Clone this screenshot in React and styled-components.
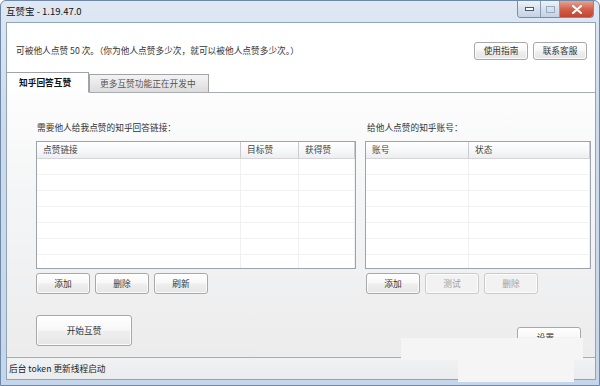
import React from 'react'
import styled, { createGlobalStyle } from 'styled-components'

const GlobalStyle = createGlobalStyle`
  html, body { margin: 0; padding: 0; background: #fff; }
  body { font-family: "Noto Sans CJK SC", "Liberation Sans", sans-serif; }
`

const FS = '8.7px'

const Window = styled.div`
  position: relative;
  width: 600px;
  height: 386px;
  box-sizing: border-box;
  display: flex;
  flex-direction: column;
  background: linear-gradient(180deg, #dfe8f3 0%, #cddbec 30%, #c6d6ea 100%);
  border: 1px solid #6f8aa8;
  border-radius: 6px 6px 0 0;
  overflow: hidden;
  color: #222;
`

const TitleBar = styled.div`
  height: 21px;
  display: flex;
  align-items: flex-start;
  justify-content: space-between;
  padding-left: 5px;
`

const Title = styled.span`
  font-size: 9.5px;
  line-height: 21px;
  color: #111;
`

const Caption = styled.div`
  display: flex;
  margin-right: 5px;
  border: 1px solid #7a8ea8;
  border-top: none;
  border-radius: 0 0 4px 4px;
  overflow: hidden;
  height: 16px;
`

const CapBtn = styled.div`
  width: ${p => p.w}px;
  height: 16px;
  display: flex;
  align-items: center;
  justify-content: center;
  background: ${p => p.close
    ? 'linear-gradient(180deg, #e8a493 0%, #d2614b 50%, #c3432d 100%)'
    : 'linear-gradient(180deg, #eef3f9 0%, #d6e1ee 50%, #c3d2e4 100%)'};
  border-left: ${p => p.first ? 'none' : '1px solid #8a9cb3'};
`

const Frame = styled.div`
  flex: 1;
  display: flex;
  padding: 0 5px 5px 5px;
  min-height: 0;
`

const Client = styled.div`
  flex: 1;
  display: flex;
  flex-direction: column;
  background: #fff;
  border: 1px solid #92a4ba;
`

const Header = styled.div`
  height: 43px;
  padding-top: 6px;
  display: flex;
  align-items: center;
  justify-content: space-between;
  padding-left: 9px;
  padding-right: 8px;
  font-size: ${FS};
  color: #333;
`

const HeaderButtons = styled.div`
  display: flex;
  gap: 5px;
`

const Button = styled.button`
  width: ${p => p.w}px;
  height: ${p => p.h || 21}px;
  box-sizing: border-box;
  padding: 0;
  font-family: inherit;
  font-size: ${FS};
  color: ${p => p.disabled ? '#a0a0a0' : '#333'};
  border: 1px solid ${p => p.disabled ? '#c8cacc' : '#a8a8a8'};
  border-radius: 3px;
  background: ${p => p.disabled
    ? '#f2f2f2'
    : 'linear-gradient(180deg, #ffffff 0%, #f8f8f8 45%, #eeeeee 55%, #e6e6e6 100%)'};
  box-shadow: inset 0 0 0 1px rgba(255,255,255,0.8);
`

const TabRow = styled.div`
  height: 20px;
  display: flex;
  align-items: flex-end;
  border-bottom: 1px solid #a8adb4;
`

const Tab = styled.div`
  box-sizing: border-box;
  height: ${p => p.active ? 21 : 18}px;
  margin-bottom: ${p => p.active ? -1 : 0}px;
  width: ${p => p.w}px;
  padding-left: ${p => p.active ? 12 : 10}px;
  display: flex;
  align-items: center;
  white-space: nowrap;
  font-size: ${FS};
  font-weight: ${p => p.active ? 'bold' : 'normal'};
  color: ${p => p.active ? '#111' : '#555'};
  background: ${p => p.active
    ? '#fff'
    : 'linear-gradient(180deg, #f3f3f3 0%, #e8e8e8 50%, #dcdcdc 100%)'};
  border: 1px solid #a0a4aa;
  border-bottom: ${p => p.active ? '1px solid #fff' : 'none'};
  border-left: ${p => p.active ? 'none' : '1px solid #a0a4aa'};
`

const Panel = styled.div`
  flex: 1;
  display: flex;
  flex-direction: column;
  padding: 28px 4px 0 29px;
  background: linear-gradient(180deg, #fdfdfd 0%, #f4f5f6 40%, #ececed 100%);
`

const Columns = styled.div`
  display: grid;
  grid-template-columns: 320px 226px;
  column-gap: 9px;
`

const Column = styled.div`
  display: flex;
  flex-direction: column;
`

const Label = styled.div`
  font-size: ${FS};
  color: #333;
  height: 14px;
  line-height: 14px;
  margin-bottom: 6px;
  padding-left: ${p => p.pad || 0}px;
`

const Table = styled.div`
  height: 128px;
  box-sizing: border-box;
  border: 1px solid #9da3aa;
  background: #fff;
  display: flex;
  flex-direction: column;
  overflow: hidden;
`

const HeadRow = styled.div`
  display: grid;
  grid-template-columns: ${p => p.cols};
  height: 16px;
  flex-shrink: 0;
  background: linear-gradient(180deg, #ffffff 0%, #f7f8f9 50%, #eceef1 100%);
  border-bottom: 1px solid #d5d5d5;
`

const HeadCell = styled.div`
  font-size: ${FS};
  color: #444;
  line-height: 16px;
  padding-left: 6px;
  border-right: 1px solid #c9cbce;
`

const BodyRow = styled.div`
  display: grid;
  grid-template-columns: ${p => p.cols};
  height: 15px;
  flex-shrink: 0;
  border-bottom: 1px solid #f1f1f1;
`

const BodyCell = styled.div`
  border-right: 1px solid #f0f0f0;
`

const ButtonRow = styled.div`
  display: flex;
  gap: 5px;
  margin-top: 4px;
  padding-left: ${p => p.pad || 0}px;
`

const BottomRow = styled.div`
  display: flex;
  justify-content: space-between;
  align-items: flex-start;
  margin-top: 21px;
  padding-right: 10px;
`

const SettingsButton = styled(Button)`
  margin-top: 12px;
`

const StatusBar = styled.div`
  height: 21px;
  display: flex;
  align-items: center;
  padding-left: 2px;
  font-size: ${FS};
  color: #222;
  background: linear-gradient(180deg, #f1f2f4 0%, #eaebed 100%);
  border-top: 1px solid #a7acb3;
`

const Watermark = styled.div`
  position: absolute;
  background: #f5f5f6;
  left: ${p => p.x}px;
  top: ${p => p.y}px;
  width: ${p => p.w}px;
  height: ${p => p.h}px;
`

const leftCols = '204px 58px 1fr'
const rightCols = '103px 1fr'

function GridTable({ cols, heads }) {
  const rows = Array.from({ length: 7 })
  return (
    <Table>
      <HeadRow cols={cols}>
        {heads.map(h => <HeadCell key={h}>{h}</HeadCell>)}
      </HeadRow>
      {rows.map((_, i) => (
        <BodyRow cols={cols} key={i}>
          {heads.map(h => <BodyCell key={h} />)}
        </BodyRow>
      ))}
    </Table>
  )
}

export default function App() {
  return (
    <>
      <GlobalStyle />
      <Window>
        <TitleBar>
          <Title>互赞宝 - 1.19.47.0</Title>
          <Caption>
            <CapBtn w={22} first>
              <svg width="9" height="4" viewBox="0 0 9 4"><rect x="0.5" y="0.5" width="8" height="3" fill="#fff" stroke="#4a5a70" strokeWidth="1" /></svg>
            </CapBtn>
            <CapBtn w={18}>
              <svg width="9" height="7" viewBox="0 0 9 7"><rect x="0.5" y="0.5" width="8" height="6" fill="none" stroke="#9aabc0" strokeWidth="1" /></svg>
            </CapBtn>
            <CapBtn w={33} close>
              <svg width="10" height="9" viewBox="0 0 10 9"><path d="M1 1 L9 8 M9 1 L1 8" stroke="#fff" strokeWidth="2.2" strokeLinecap="round" /></svg>
            </CapBtn>
          </Caption>
        </TitleBar>
        <Frame>
          <Client>
            <Header>
              <span>可被他人点赞 50 次。（你为他人点赞多少次，就可以被他人点赞多少次。）</span>
              <HeaderButtons>
                <Button w={54} h={18}>使用指南</Button>
                <Button w={54} h={18}>联系客服</Button>
              </HeaderButtons>
            </Header>
            <TabRow>
              <Tab active w={82}>知乎回答互赞</Tab>
              <Tab w={120}>更多互赞功能正在开发中</Tab>
            </TabRow>
            <Panel>
              <Columns>
                <Column>
                  <Label pad={1}>需要他人给我点赞的知乎回答链接：</Label>
                  <GridTable cols={leftCols} heads={['点赞链接', '目标赞', '获得赞']} />
                  <ButtonRow>
                    <Button w={54}>添加</Button>
                    <Button w={54}>删除</Button>
                    <Button w={54}>刷新</Button>
                  </ButtonRow>
                </Column>
                <Column>
                  <Label pad={2}>给他人点赞的知乎账号：</Label>
                  <GridTable cols={rightCols} heads={['账号', '状态']} />
                  <ButtonRow pad={1}>
                    <Button w={54}>添加</Button>
                    <Button w={54} disabled>测试</Button>
                    <Button w={54} disabled>删除</Button>
                  </ButtonRow>
                </Column>
              </Columns>
              <BottomRow>
                <Button w={96} h={31}>开始互赞</Button>
                <SettingsButton w={64}>设置...</SettingsButton>
              </BottomRow>
            </Panel>
            <StatusBar>后台 token 更新线程启动</StatusBar>
          </Client>
        </Frame>
        <Watermark x={400} y={337} w={182} h={22} />
        <Watermark x={457} y={359} w={116} h={22} />
      </Window>
    </>
  )
}
